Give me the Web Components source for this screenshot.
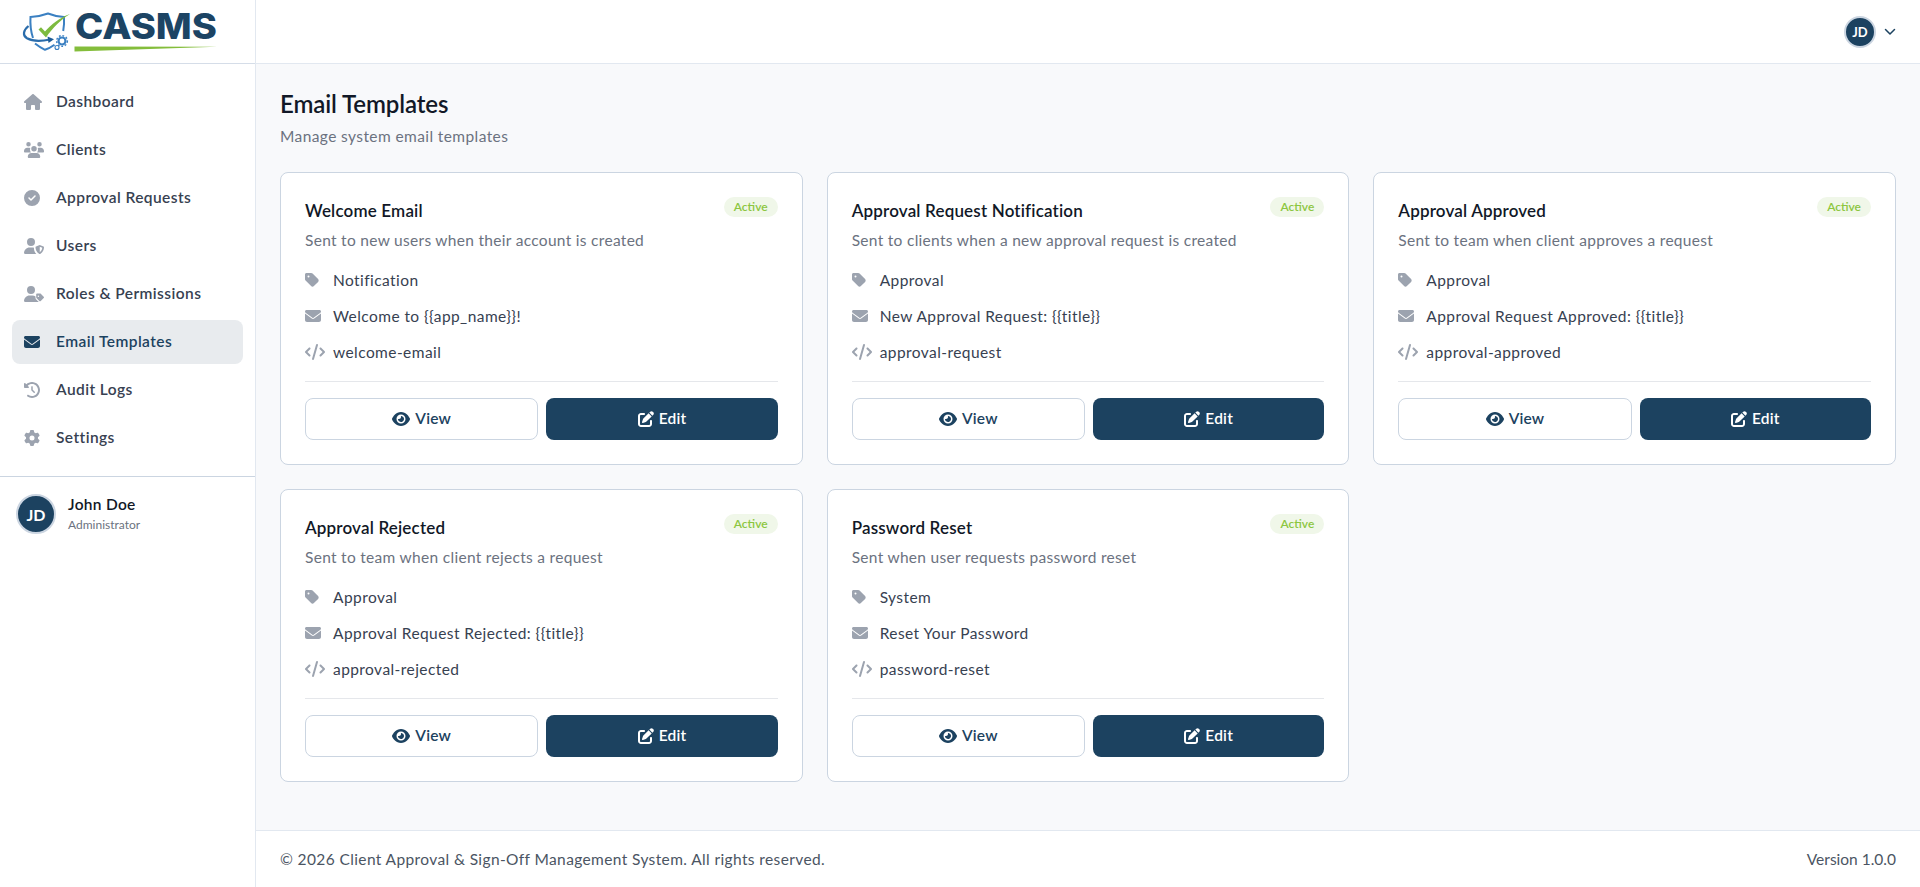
<!DOCTYPE html>
<html lang="en">
<head>
<meta charset="utf-8">
<title>Email Templates</title>
<style>
    html, body { margin: 0; height: 100%; }
    body { font-family: Lato, "Open Sans", sans-serif; background: #f8f9fb; color: #374151; }
</style>
</head>
<body>
<casms-app>
    <casms-sidebar slot="sidebar">
        <nav-item icon="house">Dashboard</nav-item>
        <nav-item icon="users">Clients</nav-item>
        <nav-item icon="circle-check">Approval Requests</nav-item>
        <nav-item icon="user-shield">Users</nav-item>
        <nav-item icon="user-tag">Roles &amp; Permissions</nav-item>
        <nav-item icon="envelope" active>Email Templates</nav-item>
        <nav-item icon="history">Audit Logs</nav-item>
        <nav-item icon="gear">Settings</nav-item>
    </casms-sidebar>
    <top-bar slot="topbar"></top-bar>

    <page-heading title="Email Templates">Manage system email templates</page-heading>
    <card-grid>
        <template-card name="Welcome Email" desc="Sent to new users when their account is created" category="Notification" subject="Welcome to {{app_name}}!" slug="welcome-email"></template-card>
        <template-card name="Approval Request Notification" desc="Sent to clients when a new approval request is created" category="Approval" subject="New Approval Request: {{title}}" slug="approval-request"></template-card>
        <template-card name="Approval Approved" desc="Sent to team when client approves a request" category="Approval" subject="Approval Request Approved: {{title}}" slug="approval-approved"></template-card>
        <template-card name="Approval Rejected" desc="Sent to team when client rejects a request" category="Approval" subject="Approval Request Rejected: {{title}}" slug="approval-rejected"></template-card>
        <template-card name="Password Reset" desc="Sent when user requests password reset" category="System" subject="Reset Your Password" slug="password-reset"></template-card>
    </card-grid>

    <page-footer slot="footer"></page-footer>
</casms-app>

<script>
// Icon paths, viewBox width first (height is always 512)
const ICONS = {
    house: [576, 'M575.8 255.5c0 18-15 32.1-32 32.1h-32l.7 160.2c0 2.7-.2 5.4-.5 8.1V472c0 22.1-17.9 40-40 40H456c-1.1 0-2.2 0-3.3-.1c-1.4 .1-2.8 .1-4.2 .1H416 392c-22.1 0-40-17.9-40-40V448 384c0-17.7-14.3-32-32-32H256c-17.7 0-32 14.3-32 32v64 24c0 22.1-17.9 40-40 40H160 128.1c-1.5 0-3-.1-4.5-.2c-1.2 .1-2.4 .2-3.6 .2H104c-22.1 0-40-17.9-40-40V360c0-.9 0-1.9 .1-2.8V287.6H32c-18 0-32-14-32-32.1c0-9 3-17 10-24L266.4 8c7-7 15-8 22-8s15 2 21 7L564.8 231.5c8 7 12 15 11 24z'],
    users: [640, 'M144 0a72 72 0 1 1 0 144a72 72 0 1 1 0-144zM496 0a72 72 0 1 1 0 144a72 72 0 1 1 0-144zM320 128a88 88 0 1 1 0 176a88 88 0 1 1 0-176zM0 288c0-58 46-104 104-104h48c18 0 35 4 50 12c-6 15-10 33-10 52c0 33 12 63 32 84H24c-13 0-24-11-24-24v-20zM616 332H416c20-21 32-51 32-84c0-19-4-37-10-52c15-8 32-12 50-12h48c58 0 104 46 104 104v20c0 13-11 24-24 24zM240 352h160c66 0 120 54 120 120c0 22-18 40-40 40H160c-22 0-40-18-40-40c0-66 54-120 120-120z'],
    'circle-check': [512, 'M256 512A256 256 0 1 0 256 0a256 256 0 1 0 0 512zM369 209L241 337c-9.4 9.4-24.6 9.4-33.9 0l-64-64c-9.4-9.4-9.4-24.6 0-33.9s24.6-9.4 33.9 0l47 47L335 175c9.4-9.4 24.6-9.4 33.9 0s9.4 24.6 0 33.9z'],
    'user-shield': [640, 'M224 0a128 128 0 1 1 0 256a128 128 0 1 1 0-256zM178 304h92c17 0 33 3 48 8v16c0 62 26 130 76 184H30c-17 0-30-13-30-30c0-98 80-178 178-178zM504 224l120 48c10 4 16 13 16 24c0 72-30 160-122 212c-9 5-19 5-28 0c-92-52-122-140-122-212c0-11 6-20 16-24l120-48zM504 282v170c48-32 76-90 80-140l-80-30z'],
    'user-tag': [640, 'M224 0a128 128 0 1 1 0 256a128 128 0 1 1 0-256zM178 304h92c36 0 70 11 98 30v40c0 21 8 42 24 57l81 81H30c-17 0-30-13-30-30c0-98 80-178 178-178zM416 240h94c13 0 25 5 34 14l86 86c13 13 13 33 0 46l-94 94c-13 13-33 13-46 0l-86-86c-9-9-14-21-14-34v-94c0-14 12-26 26-26zm44 64a24 24 0 1 0 0 48a24 24 0 1 0 0-48z'],
    envelope: [512, 'M48 64C21.5 64 0 85.5 0 112c0 15.1 7.1 29.3 19.2 38.4L236.8 313.6c11.4 8.5 27 8.5 38.4 0L492.8 150.4c12.1-9.1 19.2-23.3 19.2-38.4c0-26.5-21.5-48-48-48H48zM0 176V384c0 35.3 28.7 64 64 64H448c35.3 0 64-28.7 64-64V176L294.4 339.2c-22.8 17.1-54 17.1-76.8 0L0 176z'],
    history: [512, 'M75 75L41 41C25.9 25.9 0 36.6 0 57.9V168c0 13.3 10.7 24 24 24H134.1c21.4 0 32.1-25.9 17-41l-30.8-30.8C155 85.5 203 64 256 64c106 0 192 86 192 192s-86 192-192 192c-40.8 0-78.6-12.7-109.7-34.4c-14.5-10.1-34.4-6.6-44.6 7.9s-6.6 34.4 7.9 44.6C151.2 495 201.7 512 256 512c141.4 0 256-114.6 256-256S397.4 0 256 0C185.3 0 121.3 28.7 75 75zm181 53c-13.3 0-24 10.7-24 24V256c0 6.4 2.5 12.5 7 17l72 72c9.4 9.4 24.6 9.4 33.9 0s9.4-24.6 0-33.9l-65-65V152c0-13.3-10.7-24-24-24z'],
    gear: [512, 'M495.9 166.6c3.2 8.7 .5 18.4-6.4 24.6l-43.3 39.4c1.1 8.3 1.7 16.8 1.7 25.4s-.6 17.1-1.7 25.4l43.3 39.4c6.9 6.2 9.6 15.9 6.4 24.6c-4.4 11.9-9.7 23.3-15.8 34.3l-4.7 8.1c-6.6 11-14 21.4-22.1 31.2c-5.9 7.2-15.7 9.6-24.5 6.8l-55.7-17.7c-13.4 10.3-28.2 18.9-44 25.4l-12.5 57.1c-2 9.1-9 16.3-18.2 17.8c-13.8 2.3-28 3.5-42.5 3.5s-28.7-1.2-42.5-3.5c-9.2-1.5-16.2-8.7-18.2-17.8l-12.5-57.1c-15.8-6.5-30.6-15.1-44-25.4L83.1 425.9c-8.8 2.8-18.6 .3-24.5-6.8c-8.1-9.8-15.5-20.2-22.1-31.2l-4.7-8.1c-6.1-11-11.4-22.4-15.8-34.3c-3.2-8.7-.5-18.4 6.4-24.6l43.3-39.4C64.6 273.1 64 264.6 64 256s.6-17.1 1.7-25.4L22.4 191.2c-6.9-6.2-9.6-15.9-6.4-24.6c4.4-11.9 9.7-23.3 15.8-34.3l4.7-8.1c6.6-11 14-21.4 22.1-31.2c5.9-7.2 15.7-9.6 24.5-6.8l55.7 17.7c13.4-10.3 28.2-18.9 44-25.4l12.5-57.1c2-9.1 9-16.3 18.2-17.8C227.3 1.2 241.5 0 256 0s28.7 1.2 42.5 3.5c9.2 1.5 16.2 8.7 18.2 17.8l12.5 57.1c15.8 6.5 30.6 15.1 44 25.4l55.7-17.7c8.8-2.8 18.6-.3 24.5 6.8c8.1 9.8 15.5 20.2 22.1 31.2l4.7 8.1c6.1 11 11.4 22.4 15.8 34.3zM256 336a80 80 0 1 0 0-160 80 80 0 1 0 0 160z'],
    tag: [448, 'M0 80V229.5c0 17 6.7 33.3 18.7 45.3l176 176c25 25 65.5 25 90.5 0L418.7 317.3c25-25 25-65.5 0-90.5l-176-176c-12-12-28.3-18.7-45.3-18.7H48C21.5 32 0 53.5 0 80zm112 32a32 32 0 1 1 0 64 32 32 0 1 1 0-64z'],
    code: [640, 'M392.8 1.2c-17-4.9-34.7 5-39.6 22l-128 448c-4.9 17 5 34.7 22 39.6s34.7-5 39.6-22l128-448c4.9-17-5-34.7-22-39.6zm80.6 120.1c-12.5 12.5-12.5 32.8 0 45.3L562.7 256l-89.4 89.4c-12.5 12.5-12.5 32.8 0 45.3s32.8 12.5 45.3 0l112-112c12.5-12.5 12.5-32.8 0-45.3l-112-112c-12.5-12.5-32.8-12.5-45.3 0zm-306.7 0c-12.5-12.5-32.8-12.5-45.3 0l-112 112c-12.5 12.5-12.5 32.8 0 45.3l112 112c12.5 12.5 32.8 12.5 45.3 0s12.5-32.8 0-45.3L77.3 256l89.4-89.4c12.5-12.5 12.5-32.8 0-45.3z'],
    eye: [576, 'M288 32c-80.8 0-145.5 36.8-192.6 80.6C48.6 156 17.3 208 2.5 243.7c-3.3 7.9-3.3 16.7 0 24.6C17.3 304 48.6 356 95.4 399.4C142.5 443.2 207.2 480 288 480s145.5-36.8 192.6-80.6c46.8-43.5 78.1-95.4 93-131.1c3.3-7.9 3.3-16.7 0-24.6c-14.9-35.7-46.2-87.7-93-131.1C433.5 68.8 368.8 32 288 32zM144 256a144 144 0 1 1 288 0 144 144 0 1 1 -288 0zm144-64c0 35.3-28.7 64-64 64c-7.1 0-13.9-1.2-20.3-3.3c-5.5-1.8-11.9 1.6-11.7 7.4c.3 6.9 1.3 13.8 3.2 20.7c13.7 51.2 66.4 81.6 117.6 67.9s81.6-66.4 67.9-117.6c-11.1-41.5-47.8-69.4-88.6-71.1c-5.8-.2-9.2 6.1-7.4 11.7c2.1 6.4 3.3 13.2 3.3 20.3z'],
    edit: [512, 'M471.6 21.7c-21.9-21.9-57.3-21.9-79.2 0L362.3 51.7l97.9 97.9 30.1-30.1c21.9-21.9 21.9-57.3 0-79.2L471.6 21.7zm-299.2 220c-6.1 6.1-10.8 13.6-13.5 21.9l-29.6 88.8c-2.9 8.6-.6 18.1 5.8 24.6s15.9 8.7 24.6 5.8l88.8-29.6c8.2-2.7 15.7-7.4 21.9-13.5L437.7 172.3 339.7 74.3 172.4 241.7zM96 64C43 64 0 107 0 160V416c0 53 43 96 96 96H352c53 0 96-43 96-96V320c0-17.7-14.3-32-32-32s-32 14.3-32 32v96c0 17.7-14.3 32-32 32H96c-17.7 0-32-14.3-32-32V160c0-17.7 14.3-32 32-32h96c17.7 0 32-14.3 32-32s-14.3-32-32-32H96z']
};

// Small helper so each element only has to state its markup
class ShadowElement extends HTMLElement {
    constructor() {
        super();
        this.attachShadow({ mode: 'open' });
    }
    render(html) {
        this.shadowRoot.innerHTML = html;
    }
}

class FaIcon extends ShadowElement {
    connectedCallback() {
        const [w, d] = ICONS[this.getAttribute('name')];
        this.render(`
            <style>
                :host { display: inline-flex; line-height: 0; flex: none; }
                svg { height: var(--icon-size, 16px); width: auto; fill: currentColor; }
            </style>
            <svg viewBox="0 0 ${w} 512" aria-hidden="true"><path d="${d}"/></svg>
        `);
    }
}
customElements.define('fa-icon', FaIcon);

class CasmsApp extends ShadowElement {
    connectedCallback() {
        this.render(`
            <style>
                :host { display: grid; grid-template-columns: 256px 1fr; height: 887px; overflow: hidden; }
                .column { display: flex; flex-direction: column; min-width: 0; }
                main { flex: 1; padding: 24px; display: flex; flex-direction: column; }
            </style>
            <slot name="sidebar"></slot>
            <div class="column">
                <slot name="topbar"></slot>
                <main><slot></slot></main>
                <slot name="footer"></slot>
            </div>
        `);
    }
}
customElements.define('casms-app', CasmsApp);

class CasmsLogo extends ShadowElement {
    connectedCallback() {
        this.render(`
            <style>
                :host { display: block; line-height: 0; }
                text { font-family: Inter, "Liberation Sans", sans-serif; font-weight: 800; }
            </style>
            <svg width="230" height="56" viewBox="0 0 230 56">
                <path d="M33 38c-2-6-3-13-2.500-21c6-.2 12-1.500 17.500-3.500c5 2 10 3.300 16 3.500c.3 5 0 10-.8 14" fill="none" stroke="#3b80c2" stroke-width="2"/>
                <path d="M35 43.500c3.300 2.600 6.500 4.700 10 6.300c3-1 6.500-2.800 9.500-5" fill="none" stroke="#3b80c2" stroke-width="2"/>
                <path d="M28.500 26c-5.500 4.500-6 9.500-1.500 12.300c6 3.400 15 3 23 1.200" fill="none" stroke="#2a6cab" stroke-width="2.200"/>
                <path d="M47.500 36.500l6.500 2.800l-5.500 3.700z" fill="#1d5c97"/>
                <path d="M38.500 29.500l2.500-2.300l4 4.300c6-7 14-13.500 25-17.500c-9.500 6-17 13.500-24 23.500z" fill="#7dbb3f"/>
                <circle cx="62" cy="41" r="3.500" fill="none" stroke="#3b80c2" stroke-width="2.200"/>
                <circle cx="62" cy="41" r="5.400" fill="none" stroke="#3b80c2" stroke-width="1.400" stroke-dasharray="1.800 1.800"/>
                <circle cx="57" cy="47.500" r="2" fill="none" stroke="#3b80c2" stroke-width="1.100"/>
                <text x="75" y="38.500" font-size="35" textLength="142" lengthAdjust="spacingAndGlyphs" fill="#1c4464">CASMS</text>
                <path d="M74.500 46.500L217 46.700L74.500 51.500z" fill="#84bd3b"/>
            </svg>
        `);
    }
}
customElements.define('casms-logo', CasmsLogo);

class CasmsSidebar extends ShadowElement {
    connectedCallback() {
        this.render(`
            <style>
                :host { display: flex; flex-direction: column; background: #fff; border-right: 1px solid #e2e8f0; box-sizing: border-box; width: 256px; height: 887px; }
                .brand { height: 64px; box-sizing: border-box; border-bottom: 1px solid #d5dde8; }
                nav { padding: 16px 12px; display: flex; flex-direction: column; gap: 4px; border-bottom: 1px solid #cbd5e1; }
                .me { display: flex; align-items: center; gap: 12px; padding: 16px; }
                .who { display: flex; flex-direction: column; padding-top: 1px; }
                .who b { font-size: 15.500px; font-weight: 600; color: #111827; line-height: 20px; letter-spacing: .3px; }
                .who span { font-size: 12px; color: #6b7280; line-height: 21px; }
            </style>
            <div class="brand"><casms-logo></casms-logo></div>
            <nav><slot></slot></nav>
            <div class="me">
                <user-avatar></user-avatar>
                <div class="who"><b>John Doe</b><span>Administrator</span></div>
            </div>
        `);
    }
}
customElements.define('casms-sidebar', CasmsSidebar);

class NavItem extends ShadowElement {
    connectedCallback() {
        this.render(`
            <style>
                :host { display: flex; align-items: center; height: 44px; padding: 0 12px; border-radius: 8px; font-size: 15.500px; font-weight: 600; letter-spacing: .43px; color: #374151; }
                :host([active]) { background: #e8ebee; color: #1c4260; }
                fa-icon { color: #9ca3af; }
                :host([active]) fa-icon { color: #1c4260; }
                .box { width: 20px; margin-right: 12px; display: flex; }
                .label { margin-bottom: 2px; }
            </style>
            <span class="box"><fa-icon name="${this.getAttribute('icon')}"></fa-icon></span>
            <span class="label"><slot></slot></span>
        `);
    }
}
customElements.define('nav-item', NavItem);

class UserAvatar extends ShadowElement {
    connectedCallback() {
        this.render(`
            <style>
                :host { display: flex; align-items: center; justify-content: center; width: var(--avatar, 40px); height: var(--avatar, 40px); box-sizing: border-box; border-radius: 50%; border: 2px solid #cbd5e1; background: #1c4260; color: #fff; font-size: var(--avatar-font, 16px); font-weight: 700; flex: none; }
            </style>
            JD
        `);
    }
}
customElements.define('user-avatar', UserAvatar);

class TopBar extends ShadowElement {
    connectedCallback() {
        this.render(`
            <style>
                :host { display: flex; align-items: center; justify-content: flex-end; gap: 8px; height: 64px; box-sizing: border-box; padding: 0 24px; background: #fff; border-bottom: 1px solid #e2e8f0; --avatar: 32px; --avatar-font: 13px; color: #1c4260; }
                svg { width: 12px; height: 12px; }
            </style>
            <user-avatar></user-avatar>
            <svg viewBox="0 0 12 12" fill="none" stroke="currentColor" stroke-width="1.500" stroke-linecap="round" stroke-linejoin="round"><path d="M1.500 3.500L6 8L10.500 3.500"/></svg>
        `);
    }
}
customElements.define('top-bar', TopBar);

class PageHeading extends ShadowElement {
    connectedCallback() {
        this.render(`
            <style>
                :host { display: block; margin-bottom: 26px; }
                h1 { margin: 0 0 6px; font-size: 24px; line-height: 32px; font-weight: 600; letter-spacing: -.1px; color: #111827; }
                p { margin: 0; font-size: 15.500px; line-height: 20px; color: #6b7280; letter-spacing: .4px; }
            </style>
            <h1>${this.getAttribute('title')}</h1>
            <p><slot></slot></p>
        `);
    }
}
customElements.define('page-heading', PageHeading);

class CardGrid extends ShadowElement {
    connectedCallback() {
        this.render(`
            <style>
                :host { display: grid; grid-template-columns: repeat(3, 1fr); gap: 24px; }
            </style>
            <slot></slot>
        `);
    }
}
customElements.define('card-grid', CardGrid);

class TemplateCard extends ShadowElement {
    connectedCallback() {
        const a = n => this.getAttribute(n);
        this.render(`
            <style>
                :host { display: block; background: #fff; border: 1px solid #cbd5e1; border-radius: 8px; padding: 24px; box-sizing: border-box; height: 293px; }
                .top { display: flex; justify-content: space-between; align-items: flex-start; height: 24px; }
                h3 { margin: 0; padding-top: 2px; font-size: 17px; line-height: 24px; font-weight: 600; letter-spacing: .17px; color: #111827; }
                .badge { font-size: 12px; line-height: 20px; padding: 0 10px; border-radius: 10px; background: #f0f7e9; color: #8cc63f; font-weight: 600; }
                .desc { margin: 7px 0 0; font-size: 15.500px; line-height: 24px; color: #6b7280; letter-spacing: .3px; }
                ul { list-style: none; margin: 16px 0 0; padding: 0; display: flex; flex-direction: column; gap: 12px; }
                li { display: flex; align-items: center; height: 24px; font-size: 15.500px; color: #374151; letter-spacing: .43px; }
                li span.i { width: 28px; display: flex; color: #9ca3af; }
                li span.t { margin-bottom: 1px; }
                .actions { display: flex; gap: 8px; margin-top: 17px; padding-top: 16px; border-top: 1px solid #e5e7eb; }
            </style>
            <div class="top"><h3>${a('name')}</h3><span class="badge">Active</span></div>
            <p class="desc">${a('desc')}</p>
            <ul>
                <li><span class="i"><fa-icon name="tag"></fa-icon></span><span class="t">${a('category')}</span></li>
                <li><span class="i"><fa-icon name="envelope"></fa-icon></span><span class="t">${a('subject')}</span></li>
                <li><span class="i"><fa-icon name="code"></fa-icon></span><span class="t">${a('slug')}</span></li>
            </ul>
            <div class="actions">
                <action-button icon="eye">View</action-button>
                <action-button icon="edit" primary>Edit</action-button>
            </div>
        `);
    }
}
customElements.define('template-card', TemplateCard);

class ActionButton extends ShadowElement {
    connectedCallback() {
        this.render(`
            <style>
                :host { flex: 1 1 0; display: flex; align-items: center; justify-content: center; gap: 5px; min-height: 40px; box-sizing: content-box; border: 1px solid #cbd5e1; border-radius: 8px; background: #fff; color: #1c4260; font-size: 15.500px; font-weight: 600; letter-spacing: .2px; }
                :host([primary]) { background: #1c4260; border: 0; color: #fff; }
                .label { margin-bottom: 2px; }
            </style>
            <fa-icon name="${this.getAttribute('icon')}"></fa-icon><span class="label"><slot></slot></span>
        `);
    }
}
customElements.define('action-button', ActionButton);

class PageFooter extends ShadowElement {
    connectedCallback() {
        this.render(`
            <style>
                :host { display: flex; justify-content: space-between; align-items: center; height: 57px; box-sizing: border-box; padding: 0 24px 1px; border-top: 1px solid #e2e8f0; background: #fff; font-size: 15.500px; color: #4b5563; letter-spacing: .38px; }
                .version { letter-spacing: 0; }
            </style>
            <span>© 2026 Client Approval &amp; Sign-Off Management System. All rights reserved.</span>
            <span class="version">Version 1.0.0</span>
        `);
    }
}
customElements.define('page-footer', PageFooter);
</script>
</body>
</html>
